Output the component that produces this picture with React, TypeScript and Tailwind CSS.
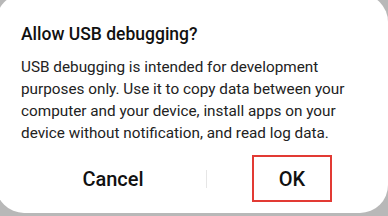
export default function App() {
  return (
    <div className="w-[388px] h-[216px] overflow-hidden bg-[#b8b8b8]" style={{ fontFamily: 'Roboto, "Noto Sans", sans-serif' }}>
      <div className="ml-[-4px] mt-[-6px] w-[392px] h-[219px] rounded-[28px] bg-white flex flex-col">
        <div className="pl-[25px] pt-[30px]">
          <div className="text-[17.5px] leading-[20px] font-medium text-[#111111]">Allow USB debugging?</div>
          <div className="mt-[12px] text-[15.3px] leading-[22px] text-[#222222] w-[355px]">
            USB debugging is intended for development purposes only. Use it to copy data between your computer and your device, install apps on your device without notification, and read log data.
          </div>
        </div>
        <div className="flex items-center mt-[11px] h-[47px]">
          <div className="w-[210px] flex justify-center pl-[24px]">
            <span className="text-[20px] font-medium text-[#111111]">Cancel</span>
          </div>
          <div className="w-px h-[18px] bg-[#e6e6e6]" />
          <div className="pl-[45px]">
            <div className="w-[80px] h-[47px] border-2 border-[#e23a34] flex items-center justify-center">
              <span className="text-[20px] font-medium text-[#111111]">OK</span>
            </div>
          </div>
        </div>
      </div>
    </div>
  );
}
